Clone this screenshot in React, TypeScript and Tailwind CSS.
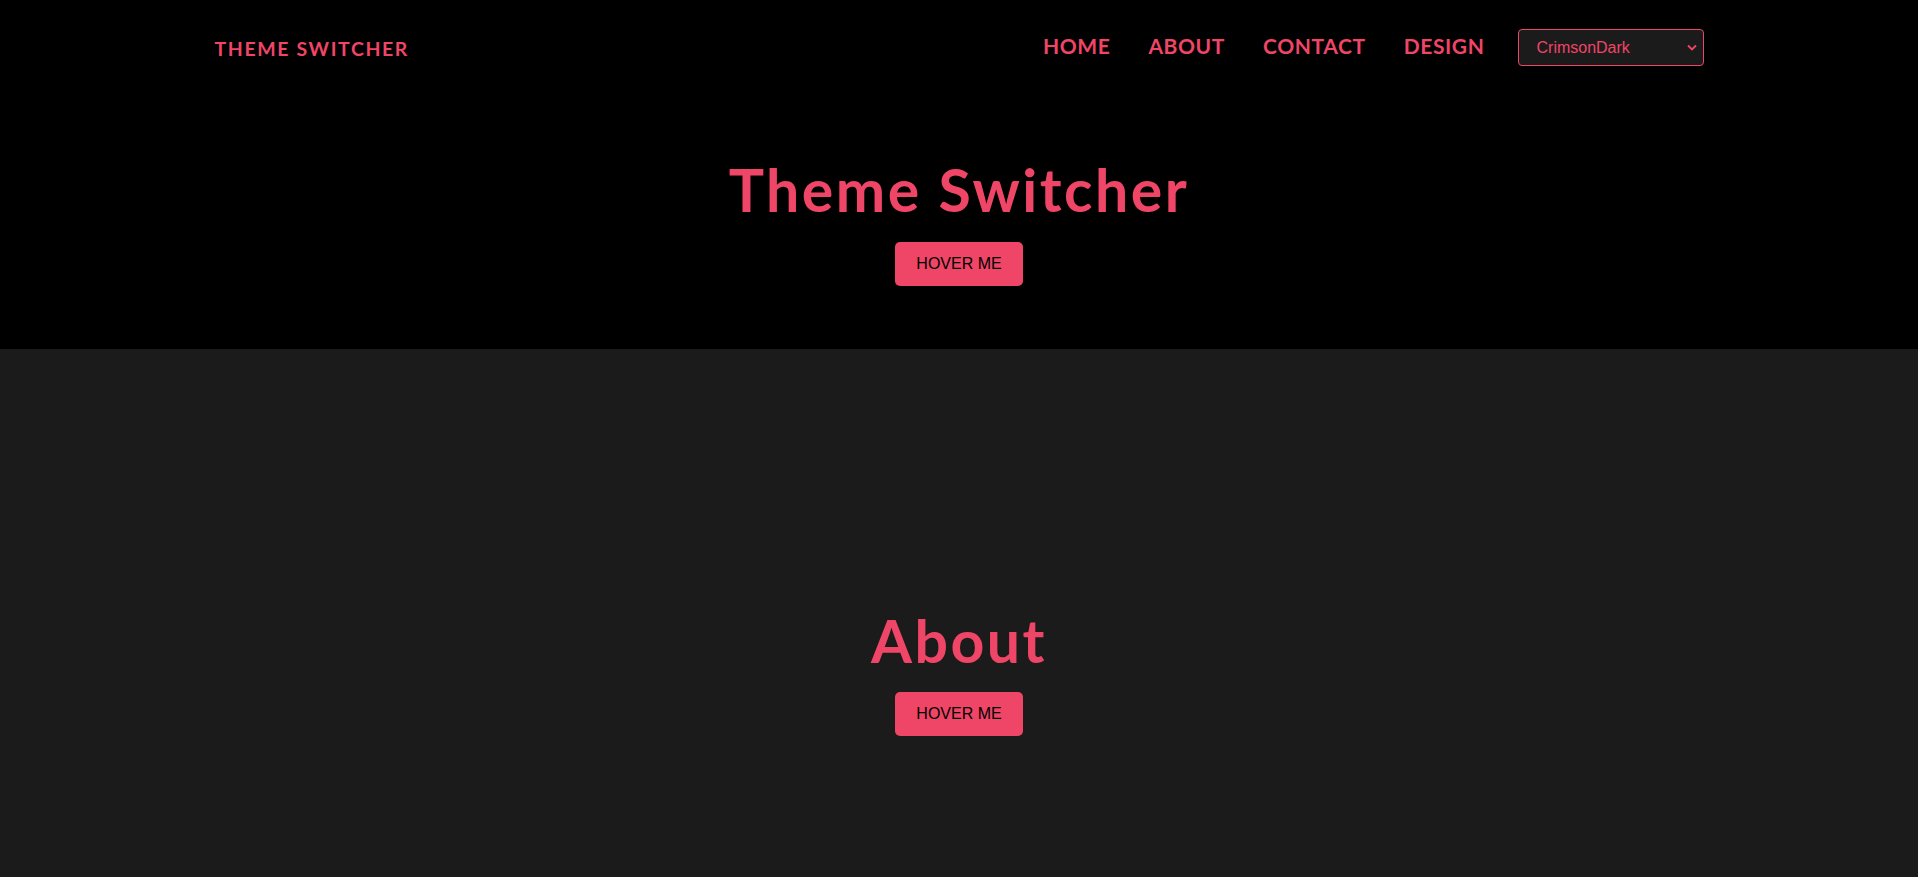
import React from "react";

const heading = { fontFamily: "Lato, 'Noto Sans', sans-serif" };

function HoverButton() {
  return (
    <button
      className="w-[128px] h-[44px] rounded-[5px] bg-[#ef4567] text-black text-[16px] hover:bg-[#ff5a7a]"
      style={{ fontFamily: "'Liberation Sans', Arial, sans-serif" }}
    >
      HOVER ME
    </button>
  );
}

export default function App() {
  return (
    <div className="min-h-screen bg-[#1b1b1b]">
      <section className="bg-black h-[349px] flex flex-col">
        <header className="h-[95px] w-[1489px] mx-auto flex items-center justify-between">
          <div
            className="text-[#ef4567] text-[19.5px] font-bold tracking-[1.6px] translate-y-[1px]"
            style={heading}
          >
            THEME SWITCHER
          </div>
          <div className="flex items-center">
            <nav className="flex items-center gap-[38px] -translate-y-[2px]" style={heading}>
              {["HOME", "ABOUT", "CONTACT", "DESIGN"].map((n) => (
                <a key={n} className="text-[#ef4567] text-[21px] font-bold tracking-[0.6px]">
                  {n}
                </a>
              ))}
            </nav>
            <div className="relative ml-[33px]">
              <select
                className="appearance-none w-[186px] h-[37px] rounded-[4px] border border-[#ef4567] bg-[#1b1b1b] text-[#ef4567] text-[16px] pl-[18px] outline-none"
                style={{ fontFamily: "'Liberation Sans', Arial, sans-serif" }}
                defaultValue="CrimsonDark"
              >
                <option>CrimsonDark</option>
                <option>Light</option>
              </select>
              <svg
                className="absolute right-[7px] top-[15px] pointer-events-none"
                width="10"
                height="7"
                viewBox="0 0 10 7"
                fill="none"
              >
                <path d="M1 1.5 L5 5.5 L9 1.5" stroke="#ef4567" strokeWidth="1.8" />
              </svg>
            </div>
          </div>
        </header>
        <div className="flex flex-col items-center mt-[60px]">
          <h1
            className="text-[#ef4567] text-[59px] font-bold leading-[1.2] tracking-[2.5px]"
            style={heading}
          >
            Theme Switcher
          </h1>
          <div className="mt-[16px]">
            <HoverButton />
          </div>
        </div>
      </section>
      <section className="bg-[#1b1b1b] h-[528px] flex flex-col items-center pt-[257px]">
        <h2
          className="text-[#ef4567] text-[59px] font-bold leading-[1.2] tracking-[2.5px]"
          style={heading}
        >
          About
        </h2>
        <div className="mt-[15px]">
          <HoverButton />
        </div>
      </section>
    </div>
  );
}
